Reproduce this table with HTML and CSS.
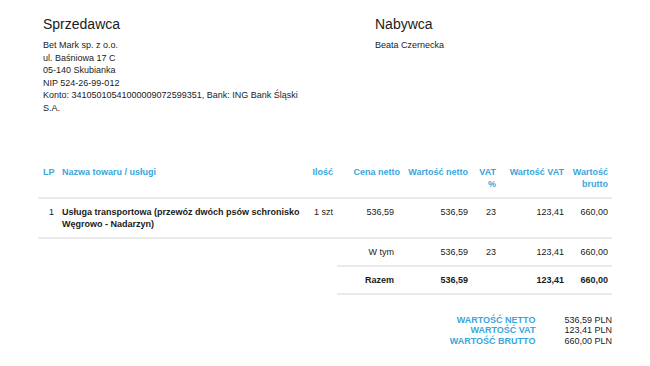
FILE: index.html
```html
<!DOCTYPE html>
<html lang="pl">
<head>
<meta charset="utf-8">
<title>Faktura</title>
<link rel="stylesheet" href="styles.css">
</head>
<body>
<div class="page">
  <div class="parties">
    <div class="party">
      <h2 class="party-title">Sprzedawca</h2>
      <p class="party-info seller-info">Bet Mark sp. z o.o.<br>ul. Baśniowa 17 C<br>05-140 Skubianka<br>NIP 524-26-99-012<br>Konto: 34105010541000009072599351, Bank: ING Bank Śląski S.A.</p>
    </div>
    <div class="party">
      <h2 class="party-title">Nabywca</h2>
      <p class="party-info">Beata Czernecka</p>
    </div>
  </div>

  <table class="items">
    <colgroup>
      <col class="c-lp"><col class="c-name"><col class="c-qty"><col class="c-price"><col class="c-net"><col class="c-vat"><col class="c-vatval"><col class="c-gross">
    </colgroup>
    <thead>
      <tr>
        <th class="left">LP</th>
        <th class="left name">Nazwa towaru / usługi</th>
        <th>Ilość</th>
        <th>Cena netto</th>
        <th>Wartość netto</th>
        <th>VAT %</th>
        <th>Wartość VAT</th>
        <th>Wartość brutto</th>
      </tr>
    </thead>
    <tbody>
      <tr class="item">
        <td>1</td>
        <td class="left name bold">Usługa transportowa (przewóz dwóch psów schronisko Węgrowo - Nadarzyn)</td>
        <td>1 szt</td>
        <td class="price">536,59</td>
        <td>536,59</td>
        <td>23</td>
        <td>123,41</td>
        <td>660,00</td>
      </tr>
      <tr class="sum">
        <td class="blank"></td><td class="blank"></td><td class="blank"></td>
        <td class="price">W tym</td>
        <td>536,59</td>
        <td>23</td>
        <td>123,41</td>
        <td>660,00</td>
      </tr>
      <tr class="sum total">
        <td class="blank"></td><td class="blank"></td><td class="blank"></td>
        <td class="price">Razem</td>
        <td>536,59</td>
        <td></td>
        <td>123,41</td>
        <td>660,00</td>
      </tr>
    </tbody>
  </table>

  <div class="summary">
    <div class="summary-grid">
      <span class="s-label">WARTOŚĆ NETTO</span><span class="s-value">536,59 PLN</span>
      <span class="s-label">WARTOŚĆ VAT</span><span class="s-value">123,41 PLN</span>
      <span class="s-label">WARTOŚĆ BRUTTO</span><span class="s-value">660,00 PLN</span>
    </div>
  </div>
</div>
</body>
</html>
```

FILE: styles.css
```css
html, body {
  margin: 0;
  padding: 0;
  background: #ffffff;
}

body {
  font-family: "Liberation Sans", Arial, Helvetica, sans-serif;
  color: #1b1b1b;
  font-size: 9px;
}

.page {
  padding: 16px 38px 0 38px;
}

.parties {
  display: grid;
  grid-template-columns: 332px 1fr;
  padding-left: 5px;
}

.party-title {
  margin: 0 0 7px 0;
  font-size: 14px;
  line-height: 16px;
  font-weight: normal;
  color: #1b1b1b;
}

.party-info {
  margin: 0;
  font-size: 9px;
  line-height: 12.6px;
}

.seller-info {
  max-width: 268px;
}

.items {
  margin-top: 44px;
  width: 574px;
  table-layout: fixed;
  border-collapse: collapse;
  font-size: 9px;
  line-height: 12px;
}

.c-lp { width: 20px; }
.c-name { width: 248px; }
.c-qty { width: 31px; }
.c-price { width: 67px; }
.c-net { width: 68px; }
.c-vat { width: 28px; }
.c-vatval { width: 68px; }
.c-gross { width: 44px; }

.items th,
.items td {
  padding: 7px 4px 7px 1px;
  text-align: right;
  vertical-align: top;
}

.items th {
  color: #3aa6dc;
  font-weight: bold;
  border-bottom: 2px solid #ebebeb;
}

.items td {
  border-bottom: 2px solid #ebebeb;
}

.items .left {
  text-align: left;
}

.items .name {
  padding-left: 4px;
}

.items th.left:first-child {
  padding-left: 5px;
}

.items .bold {
  font-weight: bold;
}

.items td.price {
  padding-right: 10px;
}

.items td.blank {
  border-bottom: none;
}

.items .total td {
  font-weight: bold;
}

.summary {
  display: flex;
  justify-content: flex-end;
  margin-top: 20px;
}

.summary-grid {
  display: grid;
  grid-template-columns: auto auto;
  column-gap: 29px;
  font-size: 9px;
  line-height: 10.5px;
}

.s-label {
  text-align: right;
  font-weight: bold;
  color: #3aa6dc;
}

.s-value {
  text-align: left;
}
```
